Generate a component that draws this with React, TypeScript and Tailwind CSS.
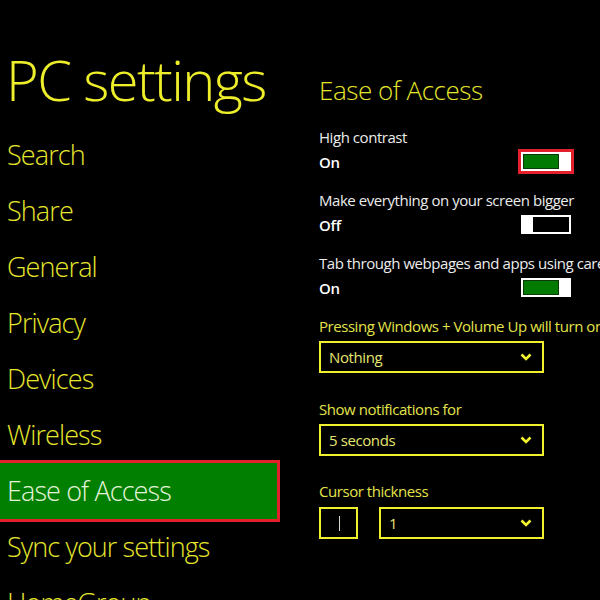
import React from "react";

const nav = [
  "Search",
  "Share",
  "General",
  "Privacy",
  "Devices",
  "Wireless",
  "Ease of Access",
  "Sync your settings",
  "HomeGroup",
];

function Toggle({ on, marked }: { on: boolean; marked?: boolean }) {
  return (
    <div
      className={
        "w-[50px] h-[19px] bg-white flex " +
        (on ? "pl-[2px] pr-[12px] py-[2px] " : "pl-[12px] pr-[2px] py-[2px] ") +
        (marked ? "outline-3 outline-solid outline-[#e3202b]" : "")
      }
    >
      <div className={on ? "flex-1 bg-[#007a00] border border-[#0a3a0a]" : "flex-1 bg-black"} />
    </div>
  );
}

function Chevron() {
  return (
    <svg width="12" height="8" viewBox="0 0 12 8" className="shrink-0">
      <path d="M1.5 1.5 L6 6 L10.5 1.5" fill="none" stroke="#f2f22e" strokeWidth="2.6" />
    </svg>
  );
}

function Dropdown({ text, width }: { text: string; width: string }) {
  return (
    <div
      className={
        "h-[32px] border-2 border-[#f0f02c] flex items-center justify-between pl-[8px] pr-[10px] " + width
      }
    >
      <span className="text-[15px] tracking-[-0.4px] text-[#e6e670]">{text}</span>
      <Chevron />
    </div>
  );
}

function ToggleGroup({ label, on, marked }: { label: string; on: boolean; marked?: boolean }) {
  return (
    <div className="flex flex-col">
      <div className="h-[20px] leading-[20px] text-[15px] tracking-[-0.45px] text-[#ececec] whitespace-nowrap">
        {label}
      </div>
      <div className="mt-[5px] h-[19px] flex items-center w-[252px] justify-between">
        <span className="text-[15px] leading-[20px] font-semibold tracking-[-0.3px] text-white">
          {on ? "On" : "Off"}
        </span>
        <Toggle on={on} marked={marked} />
      </div>
    </div>
  );
}

export default function App() {
  return (
    <div className="w-[600px] h-[600px] bg-black overflow-hidden flex font-['Open_Sans',sans-serif]">
      <div className="w-[280px] shrink-0 flex flex-col pt-[51px]">
        <div className="pl-[6px] h-[56px] leading-[56px] text-[56px] font-light tracking-[-1.6px] text-[#eeee2a] whitespace-nowrap">
          PC settings
        </div>
        <div className="mt-[20px] flex flex-col">
          {nav.map((n) => {
            const sel = n === "Ease of Access";
            return (
              <div
                key={n}
                className={
                  "h-[56px] w-[277px] shrink-0 flex items-center pl-[7px] text-[27px] font-light tracking-[-0.9px] whitespace-nowrap " +
                  (sel
                    ? "bg-[#007f00] text-[#e6f3dc] outline-3 outline-solid outline-[#e3202b]"
                    : "text-[#e6e62c]")
                }
              >
                {n}
              </div>
            );
          })}
        </div>
      </div>
      <div className="flex-1 pl-[39px] pt-[72px] flex flex-col whitespace-nowrap">
        <div className="h-[36px] leading-[36px] text-[26px] font-light tracking-[-0.45px] text-[#e6e62c]">
          Ease of Access
        </div>
        <div className="mt-[19px] flex flex-col gap-[19px]">
          <ToggleGroup label="High contrast" on={true} marked />
          <ToggleGroup label="Make everything on your screen bigger" on={false} />
          <ToggleGroup label="Tab through webpages and apps using caret browsing" on={true} />
        </div>
        <div className="mt-[19px] h-[20px] leading-[20px] text-[15px] tracking-[-0.45px] text-[#e4e44a]">
          Pressing Windows + Volume Up will turn on
        </div>
        <div className="mt-[5px]">
          <Dropdown text="Nothing" width="w-[225px]" />
        </div>
        <div className="mt-[26px] h-[20px] leading-[20px] text-[15px] tracking-[-0.45px] text-[#e4e44a]">
          Show notifications for
        </div>
        <div className="mt-[5px]">
          <Dropdown text="5 seconds" width="w-[225px]" />
        </div>
        <div className="mt-[25px] h-[20px] leading-[20px] text-[15px] tracking-[-0.45px] text-[#e4e44a]">
          Cursor thickness
        </div>
        <div className="mt-[6px] flex gap-[21px]">
          <div className="w-[39px] h-[32px] border-2 border-[#f0f02c] flex items-center pl-[18px]">
            <div className="w-[1px] h-[15px] bg-[#d8d8c8]" />
          </div>
          <Dropdown text="1" width="w-[165px]" />
        </div>
      </div>
    </div>
  );
}
